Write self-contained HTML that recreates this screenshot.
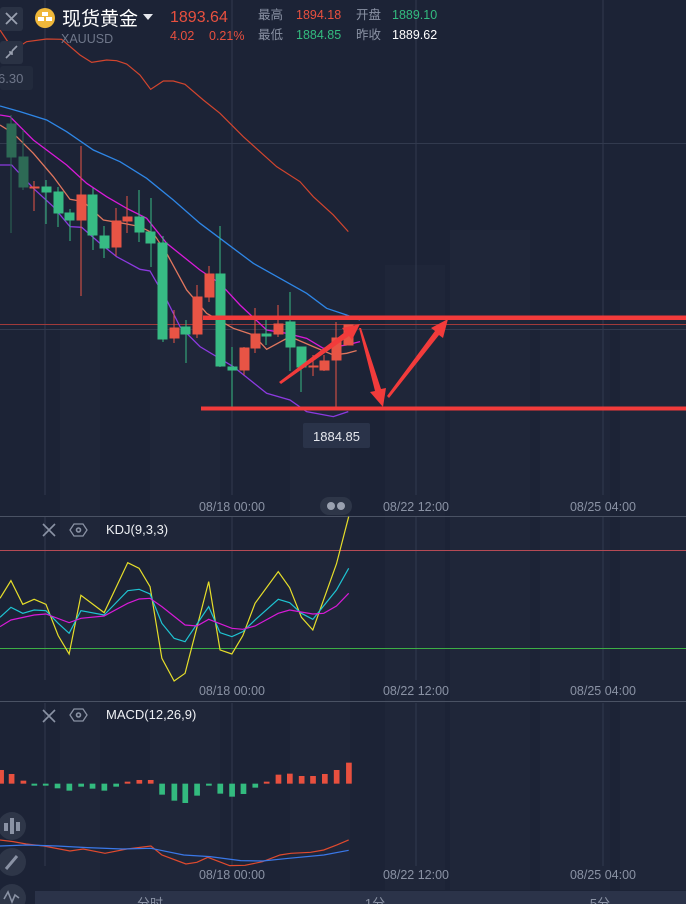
<!DOCTYPE html>
<html><head><meta charset="utf-8"><style>
html,body{margin:0;padding:0;background:#1c2336;width:686px;height:904px;overflow:hidden}
svg{display:block}
text{font-family:"Liberation Sans","Noto Sans CJK SC",sans-serif}
.n{vector-effect:non-scaling-stroke;fill:none}
</style></head><body>
<svg width="686" height="904" viewBox="0 0 686 904" xmlns="http://www.w3.org/2000/svg">
<rect width="686" height="904" fill="#1c2336"/>
<!-- faint buildings -->
<g fill="#1f2639">
<rect x="60" y="250" width="40" height="640"/><rect x="150" y="290" width="70" height="600"/>
<rect x="290" y="270" width="60" height="620"/><rect x="385" y="265" width="60" height="625"/>
<rect x="450" y="230" width="80" height="660"/><rect x="540" y="330" width="70" height="560"/>
<rect x="620" y="290" width="66" height="600"/>
</g>
<!-- grid -->
<g stroke="#323a4e" stroke-width="1">
<line x1="45" y1="0" x2="45" y2="495"/><line x1="232" y1="0" x2="232" y2="495"/>
<line x1="416" y1="0" x2="416" y2="495"/><line x1="603" y1="0" x2="603" y2="495"/>
<line x1="45" y1="517" x2="45" y2="680"/><line x1="232" y1="517" x2="232" y2="680"/>
<line x1="416" y1="517" x2="416" y2="680"/><line x1="603" y1="517" x2="603" y2="680"/>
<line x1="45" y1="703" x2="45" y2="866"/><line x1="232" y1="703" x2="232" y2="866"/>
<line x1="416" y1="703" x2="416" y2="866"/><line x1="603" y1="703" x2="603" y2="866"/>
<line x1="0" y1="143.5" x2="686" y2="143.5"/>
<line x1="0" y1="329.5" x2="686" y2="329.5"/>
</g>
<line x1="0" y1="324.5" x2="686" y2="324.5" stroke="#a03a3a" stroke-width="1"/>
<line x1="0" y1="516.5" x2="686" y2="516.5" stroke="#4a5264" stroke-width="1"/>
<line x1="0" y1="701.5" x2="686" y2="701.5" stroke="#4a5264" stroke-width="1"/>

<g transform="scale(0.3333)">
<polyline class="n" stroke="#d2452e" stroke-width="1.2" points="0,90 40,150 80,125 140,117 185,118 240,165 275,187 320,180 350,182 380,192 420,225 452,268 490,243 520,243 555,253 610,300 660,340 730,410 830,500 900,545 940,590 1000,645 1045,695"/>
</g>
<g transform="translate(0,100) scale(0.3333)">
<polyline class="n" stroke="#2e86e6" stroke-width="1.3" points="0,18 60,35 140,60 200,95 280,150 360,185 440,235 520,300 600,370 680,430 760,490 840,535 920,580 980,625 1040,645 1080,660"/>
<polyline class="n" stroke="#d81ad8" stroke-width="1.3" points="0,45 30,50 100,120 200,195 260,250 320,290 380,325 440,355 500,430 600,510 660,550 720,615 800,690 860,700 920,715 970,745 1040,735 1080,725"/>
<polyline class="n" stroke="#e0765e" stroke-width="1.3" points="0,75 40,100 100,160 160,230 210,298 250,305 310,360 370,370 420,380 460,400 500,460 560,570 620,640 700,685 760,705 800,748 870,710 940,740 1000,765 1040,760 1070,752"/>
<polyline class="n" stroke="#8c3ae0" stroke-width="1.3" points="0,195 35,195 100,265 160,320 210,380 245,382 300,430 350,470 420,508 450,513 500,600 540,680 600,740 700,800 800,880 870,900 920,935 1000,950 1045,935"/>
</g>
<g>
<g stroke="#2d6a55" fill="#2d6a55"><line x1="11" y1="115" x2="11" y2="233"/><rect x="7" y="124" width="9" height="33"/><line x1="23" y1="130" x2="23" y2="190"/><rect x="19" y="157" width="9" height="30"/></g>
<g stroke="#37bb84" fill="#37bb84">
<line x1="46" y1="180" x2="46" y2="224"/><rect x="42" y="187" width="9" height="5"/>
<line x1="58" y1="187" x2="58" y2="227"/><rect x="54" y="192" width="9" height="21"/>
<line x1="70" y1="209" x2="70" y2="241"/><rect x="65" y="213" width="9" height="7"/>
<line x1="93" y1="188" x2="93" y2="250"/><rect x="88" y="195" width="9" height="40"/>
<line x1="104" y1="226" x2="104" y2="258"/><rect x="100" y="236" width="9" height="12"/>
<line x1="139" y1="190" x2="139" y2="242"/><rect x="135" y="217" width="9" height="15"/>
<line x1="151" y1="198" x2="151" y2="267"/><rect x="146" y="232" width="9" height="11"/>
<line x1="163" y1="236" x2="163" y2="342"/><rect x="158" y="243" width="9" height="96"/>
<line x1="186" y1="320" x2="186" y2="363"/><rect x="181" y="327" width="9" height="7"/>
<line x1="220" y1="226" x2="220" y2="367"/><rect x="216" y="274" width="9" height="92"/>
<line x1="232" y1="347" x2="232" y2="407"/><rect x="228" y="367" width="9" height="3"/>
<line x1="266" y1="320" x2="266" y2="345"/><rect x="262" y="334" width="9" height="2"/>
<line x1="290" y1="292" x2="290" y2="371"/><rect x="286" y="322" width="9" height="25"/>
<line x1="301" y1="347" x2="301" y2="392"/><rect x="297" y="347" width="9" height="20"/>
</g>
<g stroke="#e85445" fill="#e85445">
<line x1="34" y1="181" x2="34" y2="211"/><rect x="30" y="187" width="9" height="1"/>
<line x1="81" y1="146" x2="81" y2="296"/><rect x="77" y="195" width="9" height="25"/>
<line x1="116" y1="208" x2="116" y2="256"/><rect x="112" y="221" width="9" height="26"/>
<line x1="127" y1="196" x2="127" y2="233"/><rect x="123" y="217" width="9" height="4"/>
<line x1="174" y1="310" x2="174" y2="343"/><rect x="170" y="328" width="9" height="10"/>
<line x1="197" y1="285" x2="197" y2="338"/><rect x="193" y="297" width="9" height="37"/>
<line x1="209" y1="266" x2="209" y2="302"/><rect x="205" y="274" width="9" height="23"/>
<line x1="244" y1="347" x2="244" y2="375"/><rect x="240" y="348" width="9" height="22"/>
<line x1="255" y1="308" x2="255" y2="353"/><rect x="251" y="334" width="9" height="14"/>
<line x1="278" y1="305" x2="278" y2="337"/><rect x="274" y="324" width="9" height="10"/>
<line x1="313" y1="355" x2="313" y2="376"/><rect x="309" y="366" width="9" height="1"/>
<line x1="324" y1="355" x2="324" y2="371"/><rect x="320" y="361" width="9" height="9"/>
<line x1="336" y1="322" x2="336" y2="408"/><rect x="332" y="338" width="9" height="22"/>
<rect x="344" y="325" width="9" height="20"/>
</g>
</g>
<g fill="#f23b3b">
<rect x="203" y="315.5" width="483" height="4.5"/>
<rect x="201" y="406.5" width="485" height="4"/>
<polygon points="279,382 345,332 342,328 360,324 352,340 349,336 281,384"/>
<polygon points="359,328 375,391 370,392 383,407 386,388 381,389 361,328"/>
<polygon points="387,396 435,331 431,328 448,319 443,338 439,335 389,398"/>
</g>
<rect x="303" y="423" width="67" height="25" rx="2" fill="#2a3349"/>
<text x="336.5" y="441" font-size="13" fill="#e6e8ee" text-anchor="middle">1884.85</text>
<g font-size="12.5" fill="#8a92a4" text-anchor="middle">
<text x="232" y="511">08/18 00:00</text><text x="416" y="511">08/22 12:00</text><text x="603" y="511">08/25 04:00</text>
<text x="232" y="695">08/18 00:00</text><text x="416" y="695">08/22 12:00</text><text x="603" y="695">08/25 04:00</text>
<text x="232" y="879">08/18 00:00</text><text x="416" y="879">08/22 12:00</text><text x="603" y="879">08/25 04:00</text>
</g>
<rect x="320" y="497" width="32" height="18" rx="9" fill="#2e3648"/>
<circle cx="331" cy="506" r="4" fill="#9aa1b0"/><circle cx="341" cy="506" r="4" fill="#9aa1b0"/>
<line x1="0" y1="550.5" x2="686" y2="550.5" stroke="#b54a55" stroke-width="1"/>
<line x1="0" y1="648.5" x2="686" y2="648.5" stroke="#3cae45" stroke-width="1"/>
<g transform="translate(0,490) scale(0.4375,0.3333)">
<polyline class="n" stroke="#e6de2a" stroke-width="1.2" points="0,325 25,272 52,343 78,328 105,343 133,437 158,492 185,316 238,368 292,218 318,235 343,290 370,505 398,573 423,550 477,275 503,480 530,492 555,437 583,340 636,245 662,293 689,382 715,420 769,222 797,80"/>
<polyline class="n" stroke="#1fc4d2" stroke-width="1.2" points="0,382 25,352 52,370 78,360 105,362 133,400 158,430 185,362 238,375 292,302 318,298 343,312 370,400 398,445 423,455 477,350 503,428 530,440 555,425 583,390 636,328 662,338 689,370 715,388 769,300 797,235"/>
<polyline class="n" stroke="#d81ad8" stroke-width="1.2" points="0,410 25,390 78,375 105,372 158,398 185,385 238,378 292,340 318,327 343,325 370,350 423,405 450,408 477,388 530,415 555,418 583,408 636,370 662,360 715,372 740,370 769,348 797,310"/>
</g>
<g stroke="#8a92a4" stroke-width="1.6" fill="none">
<path d="M43 524 L55 536 M55 524 L43 536"/>
<path d="M43 710 L55 722 M55 710 L43 722"/>
<polygon points="74,524 83,524 87,530 83,536 74,536 70,530" stroke-width="1.3"/>
<circle cx="78.5" cy="530" r="2"/>
<polygon points="74,709 83,709 87,715 83,721 74,721 70,715" stroke-width="1.3"/>
<circle cx="78.5" cy="715" r="2"/>
</g>
<text x="106" y="534" font-size="13" fill="#eef0f4">KDJ(9,3,3)</text>
<text x="106" y="719" font-size="13" fill="#eef0f4">MACD(12,26,9)</text>
<g transform="translate(0,700) scale(0.4375,0.3333)">
<g fill="#e8503f">
<rect x="0" y="210" width="9" height="41"/><rect x="20" y="222" width="13" height="29"/><rect x="47" y="242" width="13" height="9"/>
<rect x="285" y="245" width="13" height="6"/><rect x="312" y="240" width="13" height="11"/><rect x="338" y="240" width="13" height="11"/>
<rect x="603" y="245" width="13" height="6"/><rect x="630" y="224" width="13" height="27"/><rect x="656" y="221" width="13" height="30"/>
<rect x="683" y="228" width="13" height="23"/><rect x="709" y="228" width="13" height="23"/><rect x="736" y="222" width="13" height="29"/>
<rect x="763" y="210" width="13" height="41"/><rect x="791" y="188" width="13" height="63"/>
</g>
<g fill="#33bb7f">
<rect x="72" y="251" width="13" height="6"/><rect x="98" y="251" width="13" height="6"/><rect x="125" y="251" width="13" height="14"/>
<rect x="152" y="251" width="13" height="21"/><rect x="179" y="251" width="13" height="9"/><rect x="205" y="251" width="13" height="15"/>
<rect x="232" y="251" width="13" height="21"/><rect x="259" y="251" width="13" height="9"/>
<rect x="364" y="251" width="13" height="33"/><rect x="392" y="251" width="13" height="51"/><rect x="417" y="251" width="13" height="58"/>
<rect x="444" y="251" width="13" height="36"/><rect x="471" y="251" width="13" height="6"/><rect x="497" y="251" width="13" height="30"/>
<rect x="524" y="251" width="13" height="39"/><rect x="550" y="251" width="13" height="31"/><rect x="577" y="251" width="13" height="12"/>
</g>
<polyline class="n" stroke="#e04a2e" stroke-width="1.2" points="0,420 30,425 60,432 100,438 160,453 190,447 240,460 290,447 345,438 370,465 425,492 450,487 475,472 525,497 560,496 600,485 640,465 665,460 710,457 740,450 770,435 797,420"/>
<polyline class="n" stroke="#3a78e8" stroke-width="1.2" points="0,438 60,435 130,438 200,443 280,447 345,445 420,465 480,470 550,482 600,483 660,475 740,465 797,451"/>
</g>
<rect x="0" y="7" width="23" height="24" rx="3" fill="#2a3244"/>
<path d="M6 13 L17 24 M17 13 L6 24" stroke="#9aa1b0" stroke-width="1.8"/>
<rect x="0" y="41" width="23" height="23" rx="3" fill="#2a3244"/>
<path d="M6 58 L12 52 M9 52 L12 52 L12 55 M17 46 L12 51" stroke="#9aa1b0" stroke-width="1.6" fill="none"/>
<rect x="0" y="66" width="33" height="24" rx="3" fill="#222a3c"/>
<text x="-2" y="83" font-size="13" fill="#6f778a">6.30</text>
<circle cx="12" cy="826" r="14" fill="#2e3648"/>
<g fill="#8a92a4"><rect x="4" y="823" width="4" height="8"/><rect x="10" y="818" width="4" height="16"/><rect x="16" y="822" width="4" height="9"/></g>
<circle cx="12" cy="862" r="14" fill="#2e3648"/>
<path d="M6 869 L17 856" stroke="#8a92a4" stroke-width="3"/>
<circle cx="12" cy="898" r="14" fill="#2e3648"/>
<path d="M4 899 L8 892 L12 902 L15 895 L19 898" stroke="#8a92a4" stroke-width="1.6" fill="none"/>
<rect x="35" y="891" width="651" height="13" fill="#2b3349"/>
<g font-size="13" fill="#8a92a4" text-anchor="middle"><text x="150" y="908">分时</text><text x="375" y="908">1分</text><text x="600" y="908">5分</text></g>
<circle cx="45" cy="18" r="10" fill="#f0b83a"/>
<g fill="#fff"><rect x="42" y="12" width="6" height="4"/><rect x="38" y="17" width="6" height="4"/><rect x="46" y="17" width="6" height="4"/></g>
<text x="62" y="25" font-size="19" fill="#ffffff">现货黄金</text>
<path d="M143 14 L153 14 L148 20 Z" fill="#e6e8ee"/>
<text x="61" y="43" font-size="12.5" fill="#6f778a">XAUUSD</text>
<text x="170" y="22" font-size="16" fill="#e8503f">1893.64</text>
<text x="170" y="40" font-size="12.5" fill="#e8503f">4.02</text>
<text x="209" y="40" font-size="12.5" fill="#e8503f">0.21%</text>
<g font-size="12.5">
<text x="258" y="19" fill="#8a92a4">最高</text><text x="296" y="19" fill="#e8503f">1894.18</text>
<text x="356" y="19" fill="#8a92a4">开盘</text><text x="392" y="19" fill="#33bb7f">1889.10</text>
<text x="258" y="39" fill="#8a92a4">最低</text><text x="296" y="39" fill="#33bb7f">1884.85</text>
<text x="356" y="39" fill="#8a92a4">昨收</text><text x="392" y="39" fill="#ffffff">1889.62</text>
</g>
</svg>
</body></html>
